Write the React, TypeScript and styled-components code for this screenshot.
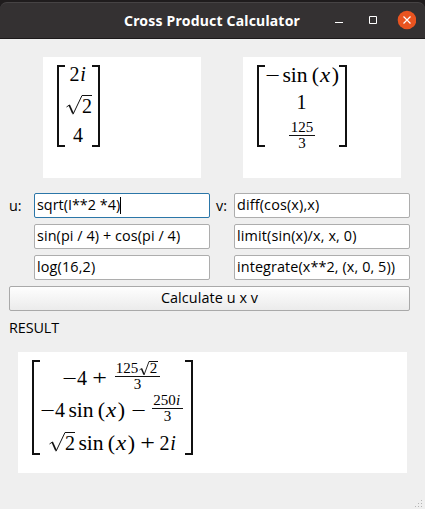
import React from "react";
import styled, { createGlobalStyle, css } from "styled-components";

const GlobalStyle = createGlobalStyle`
  *, *::before, *::after { box-sizing: border-box; }
  html, body { margin: 0; background: #1f1c1d; }
  body { overflow: hidden; }
`;

const Window = styled.main`
  width: 425px;
  height: 509px;
  padding-top: 2px;
  display: flex;
  flex-direction: column;
  background: #1f1c1d;
  color: #000;
  font: 14.4px/18px "Open Sans", "Noto Sans", sans-serif;
`;

const TitleBar = styled.header`
  flex: none;
  height: 37px;
  display: flex;
  align-items: center;
  padding: 0 9px 0 124px;
  background: #343132;
  border-top: 1px solid #464344;
  border-bottom: 1px solid #1c191a;
  border-radius: 7px 7px 0 0;
`;

const Title = styled.h1`
  flex: 1;
  margin: 0;
  color: #fff;
  font: 700 14px/20px "Noto Sans", sans-serif;
  letter-spacing: 0.2px;
  white-space: nowrap;
`;

const Controls = styled.div`
  display: flex;
  flex: none;
  height: 20px;
  margin-top: -1px;
`;

const Body = styled.div`
  position: relative;
  flex: 1;
  background: #efefef;
  padding: 18px 15px 0 9px;
`;

const Previews = styled.div`
  display: grid;
  grid-template-columns: 158px 158px;
  column-gap: 42px;
  padding-left: 34px;
`;

const Paper = styled.section`
  height: 121px;
  padding: 8px 0 0 14px;
  background: #fff;
`;

const ResultPaper = styled(Paper)`
  width: 389px;
  margin-left: 9px;
`;

const Matrix = styled.div<{ $w: number; $h: number }>`
  display: grid;
  grid-template-columns: 8px 1fr 8px;
  grid-template-rows: 100%;
  width: ${(p) => p.$w}px;
  height: ${(p) => p.$h}px;
  color: #000;
  font-family: "Liberation Serif", serif;
`;

const Bracket = styled.div<{ $right?: boolean }>`
  border: solid #111;
  border-width: ${(p) => (p.$right ? "2px 2px 2px 0" : "2px 0 2px 2px")};
`;

const Rows = styled.div`
  display: flex;
  flex-direction: column;
`;

const Row = styled.div<{ $h: number; $pad?: number; $top?: number }>`
  flex: none;
  display: flex;
  align-items: center;
  height: ${(p) => p.$h}px;
  margin-top: ${(p) => p.$top ?? 0}px;
  padding-left: ${(p) => p.$pad ?? 0}px;
`;

const Glyph = styled.span<{ $w: number; $gap?: number; $size?: number; $italic?: boolean; $stretch?: number }>`
  flex: none;
  display: flex;
  justify-content: center;
  width: ${(p) => p.$w}px;
  margin-left: ${(p) => p.$gap ?? 0}px;
  font-size: ${(p) => p.$size ?? 20}px;
  line-height: 1;
  font-style: ${(p) => (p.$italic ? "italic" : "normal")};
  white-space: pre;
  ${(p) => p.$stretch && css`transform: scaleX(${p.$stretch});`}
`;

const Fraction = styled.span<{ $w: number; $gap?: number }>`
  flex: none;
  display: flex;
  flex-direction: column;
  width: ${(p) => p.$w}px;
  margin-left: ${(p) => p.$gap ?? 0}px;
  margin-top: -2px;
`;

const Part = styled.span`
  display: flex;
  align-items: center;
  justify-content: center;
  height: 15px;
`;

const Bar = styled.span`
  height: 1px;
  background: #111;
`;

const RootBox = styled.span<{ $gap?: number; $lift?: number }>`
  flex: none;
  display: flex;
  margin-left: ${(p) => p.$gap ?? 0}px;
  margin-bottom: ${(p) => (p.$lift ?? 0) * 2}px;
`;

const RootSign = styled.svg`
  flex: none;
  display: block;
  overflow: visible;
`;

const Radicand = styled.span<{ $w: number; $h: number; $drop: number }>`
  flex: none;
  display: flex;
  justify-content: center;
  align-items: flex-end;
  width: ${(p) => p.$w}px;
  height: ${(p) => p.$h}px;
  border-top: 1px solid #111;

  > ${Glyph} {
    margin-bottom: -${(p) => p.$drop}px;
  }
`;

const Form = styled.div`
  display: grid;
  grid-template-columns: 25px 176px 24px 176px;
  grid-auto-rows: 25px;
  row-gap: 6px;
  margin-top: 15px;
`;

const Label = styled.label<{ $inset?: number }>`
  padding: 4px 0 0 ${(p) => p.$inset ?? 0}px;
  white-space: nowrap;
`;

const Field = styled.div<{ $active?: boolean; $ls?: number }>`
  display: flex;
  align-items: center;
  height: 25px;
  padding: 0 0 1px 2px;
  background: #fff;
  border: 1px solid ${(p) => (p.$active ? "#2b76a8" : "#adadad")};
  border-radius: 2px;
  letter-spacing: ${(p) => p.$ls ?? 0}px;
  white-space: pre;
`;

const Caret = styled.span`
  width: 1px;
  height: 17px;
  background: #000;
`;

const CalcButton = styled.button`
  display: block;
  width: 401px;
  height: 25px;
  margin-top: 6px;
  padding: 0 0 1px;
  border: 1px solid #a9a9a9;
  border-radius: 2px;
  background: linear-gradient(#fefefe, #ebebeb);
  color: #000;
  font: inherit;
  letter-spacing: 0.08px;
`;

const ResultLabel = styled.div`
  height: 18px;
  margin: 8px 0 15px;
  letter-spacing: -0.1px;
`;

const Grip = styled.svg`
  position: absolute;
  right: 0;
  bottom: 0;
`;

function Root({ small, gap, lift }: { small?: boolean; gap?: number; lift?: number }) {
  const w = small ? 10 : 16;
  const h = small ? 15 : 20;
  return (
    <RootBox $gap={gap} $lift={lift}>
      <RootSign width={w} height={h} viewBox={`0 0 ${w} ${h}`} fill="none" stroke="#111">
        {small ? (
          <>
            <path d="M0.5 9 L2.5 7.5" strokeWidth="0.8" />
            <path d="M2.5 7.5 L5 13.5" strokeWidth="1.5" />
            <path d="M5 14 L10 0.5" strokeWidth="0.9" />
          </>
        ) : (
          <>
            <path d="M0.5 12 L3.4 10" strokeWidth="0.9" />
            <path d="M3.2 10 L7 18.5" strokeWidth="1.8" />
            <path d="M7 19.3 L16 0.5" strokeWidth="1" />
          </>
        )}
      </RootSign>
      <Radicand $w={small ? 9 : 10} $h={h} $drop={small ? 0 : 1}>
        <Glyph $w={9} $size={small ? 15 : 20}>2</Glyph>
      </Radicand>
    </RootBox>
  );
}

function SinX({ gap }: { gap: number }) {
  return (
    <>
      <Glyph $w={24} $gap={gap} $size={20} $stretch={1.08}>sin</Glyph>
      <Glyph $w={5} $gap={6} $size={22}>(</Glyph>
      <Glyph $w={10} $gap={2} $italic $stretch={1.15}>x</Glyph>
      <Glyph $w={5} $gap={3} $size={22}>)</Glyph>
    </>
  );
}

const Operator = ({ children, gap }: { children: string; gap?: number }) => (
  <Glyph $w={13} $gap={gap} $size={20} $stretch={1.3}>{children}</Glyph>
);

export default function App() {
  return (
    <Window>
      <GlobalStyle />
      <TitleBar>
        <Title>Cross Product Calculator</Title>
        <Controls>
          <svg width="82" height="20" viewBox="0 0 82 20" fill="none" stroke="#fff">
            <path d="M1 12.5h8" />
            <path d="M35.5 6.5h7v7h-7z" />
            <circle cx="73" cy="10" r="9.3" fill="#e95420" stroke="none" />
            <path d="M69.5 6.5l7 7M76.5 6.5l-7 7" strokeWidth="1.2" />
          </svg>
        </Controls>
      </TitleBar>
      <Body>
        <Previews>
          <Paper>
            <Matrix $w={43} $h={82}>
              <Bracket />
              <Rows>
                <Row $h={20} $pad={5} $top={-1}>
                  <Glyph $w={9}>2</Glyph>
                  <Glyph $w={6} $gap={1} $italic>i</Glyph>
                </Row>
                <Row $h={20} $top={11}>
                  <Root gap={1} />
                </Row>
                <Row $h={20} $top={10} $pad={8}>
                  <Glyph $w={10}>4</Glyph>
                </Row>
              </Rows>
              <Bracket $right />
            </Matrix>
          </Paper>
          <Paper>
            <Matrix $w={90} $h={82}>
              <Bracket />
              <Rows>
                <Row $h={20} $pad={1}>
                  <Operator>−</Operator>
                  <SinX gap={4} />
                </Row>
                <Row $h={20} $top={7} $pad={32}>
                  <Glyph $w={9}>1</Glyph>
                </Row>
                <Row $h={31} $top={9} $pad={24}>
                  <Fraction $w={26}>
                    <Part><Glyph $w={20} $size={15}>125</Glyph></Part>
                    <Bar />
                    <Part><Glyph $w={8} $size={15}>3</Glyph></Part>
                  </Fraction>
                </Row>
              </Rows>
              <Bracket $right />
            </Matrix>
          </Paper>
        </Previews>

        <Form>
          <Label>u:</Label>
          <Field $active>sqrt(I**2 *4)<Caret /></Field>
          <Label $inset={6}>v:</Label>
          <Field $ls={0.15}>diff(cos(x),x)</Field>
          <span />
          <Field $ls={0.08}>sin(pi / 4) + cos(pi / 4)</Field>
          <span />
          <Field $ls={0.14}>limit(sin(x)/x, x, 0)</Field>
          <span />
          <Field $ls={0.14}>log(16,2)</Field>
          <span />
          <Field $ls={0.1}>integrate(x**2, (x, 0, 5))</Field>
        </Form>
        <CalcButton>Calculate u x v</CalcButton>
        <ResultLabel>RESULT</ResultLabel>

        <ResultPaper>
          <Matrix $w={161} $h={95}>
            <Bracket />
            <Rows>
              <Row $h={31} $top={2} $pad={23}>
                <Operator>−</Operator>
                <Glyph $w={10} $gap={1}>4</Glyph>
                <Operator gap={6}>+</Operator>
                <Fraction $w={45} $gap={9}>
                  <Part>
                    <Glyph $w={20} $size={15}>125</Glyph>
                    <Root small gap={2} />
                  </Part>
                  <Bar />
                  <Part><Glyph $w={8} $size={15}>3</Glyph></Part>
                </Fraction>
              </Row>
              <Row $h={31} $top={1} $pad={1}>
                <Operator>−</Operator>
                <Glyph $w={10} $gap={1}>4</Glyph>
                <SinX gap={4} />
                <Operator gap={8}>−</Operator>
                <Fraction $w={31} $gap={7}>
                  <Part>
                    <Glyph $w={20} $size={15}>250</Glyph>
                    <Glyph $w={5} $gap={1} $size={15} $italic>i</Glyph>
                  </Part>
                  <Bar />
                  <Part><Glyph $w={8} $size={15}>3</Glyph></Part>
                </Fraction>
              </Row>
              <Row $h={20} $top={8} $pad={9}>
                <Root lift={1} />
                <SinX gap={4} />
                <Operator gap={7}>+</Operator>
                <Glyph $w={9} $gap={6}>2</Glyph>
                <Glyph $w={6} $gap={1} $italic>i</Glyph>
              </Row>
            </Rows>
            <Bracket $right />
          </Matrix>
        </ResultPaper>

        <Grip width="11" height="11" viewBox="0 0 11 11" fill="#b4b4b4">
          <path d="M7 2h1v1H7zM4 5h1v1H4zM7 5h1v1H7zM1 8h1v1H1zM4 8h1v1H4zM7 8h1v1H7z" />
        </Grip>
      </Body>
    </Window>
  );
}
